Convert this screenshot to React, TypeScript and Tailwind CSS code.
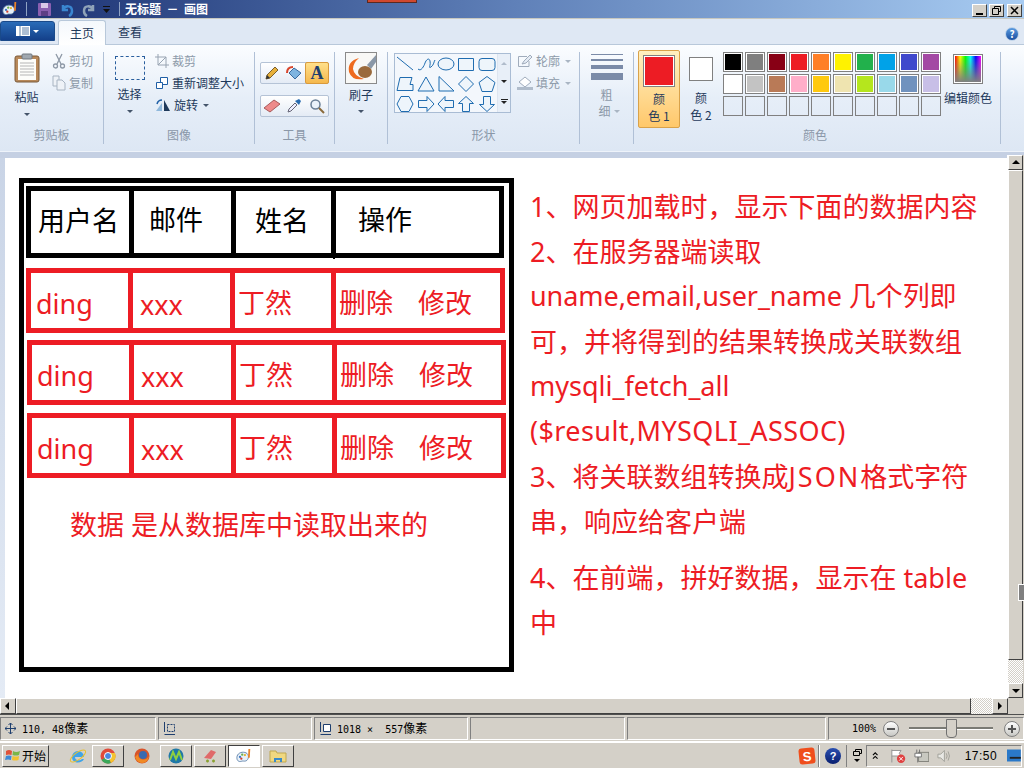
import React from 'react';

const red = 'border-[#ed1c24]';

const palette1 = ['#000000', '#7f7f7f', '#880015', '#ed1c24', '#ff7f27', '#fff200', '#22b14c', '#00a2e8', '#3f48cc', '#a349a4'];
const palette2 = ['#ffffff', '#c3c3c3', '#b97a57', '#ffaec9', '#ffc90e', '#efe4b0', '#b5e61d', '#99d9ea', '#7092be', '#c8bfe7'];

const rightText: { text: React.ReactNode; cls: string }[] = [
  { text: '1、网页加载时，显示下面的数据内容', cls: 'top-[29px]' },
  { text: '2、在服务器端读取', cls: 'top-[74px]' },
  { text: 'uname,email,user_name 几个列即', cls: 'top-[118px] tracking-[-0.07px]' },
  { text: '可，并将得到的结果转换成关联数组', cls: 'top-[164px]' },
  { text: 'mysqli_fetch_all', cls: 'top-[208px]' },
  { text: '($result,MYSQLI_ASSOC)', cls: 'top-[253px] tracking-[0.4px]' },
  { text: <>3、将关联数组转换成<span className="tracking-[2px]">JSON</span>格式字符</>, cls: 'top-[299px]' },
  { text: '串，响应给客户端', cls: 'top-[344px]' },
  { text: '4、在前端，拼好数据，显示在 table', cls: 'top-[400px]' },
  { text: '中', cls: 'top-[445px]' },
];

const Arrow = ({ className = '' }: { className?: string }) => (
  <span className={`inline-block w-0 h-0 border-l-[3px] border-r-[3px] border-t-[3px] border-l-transparent border-r-transparent ${className}`} />
);

const GroupLabel = ({ children }: { children: React.ReactNode }) => (
  <div className="absolute bottom-[1px] left-0 right-0 text-center text-[12px] leading-[16px] text-[#8a97a8]">{children}</div>
);

const ShapeIcon = ({ d }: { d: string }) => (
  <svg width="20" height="20" viewBox="0 0 20 20" fill="none" stroke="#1f6cb0" strokeWidth="1">
    <path d={d} fill="#eef5fb" />
  </svg>
);

const shapes = [
  'M2 3L18 16',
  'M2 15C5 18 8 12 9 9S13 3 14 7S12 15 15 13S18 7 19 6',
  'M2 10a8 6 0 1 0 16 0a8 6 0 1 0 -16 0Z',
  'M2.5 4.5H17.5V16.5H2.5Z',
  'M5 4.5H15Q18 4.5 18 7.5V13.5Q18 16.5 15 16.5H5Q2 16.5 2 13.5V7.5Q2 4.5 5 4.5Z',
  'M5 3.5H17L15 10.5H18V16.5H2Z',
  'M10 3L18 17H2Z',
  'M3 2.5L18 17H3Z',
  'M10 2.5L17.5 10L10 17.5L2.5 10Z',
  'M10 2.5L18 8.5L15 17.5H5L2 8.5Z',
  'M6 2.5H14L18 10L14 17.5H6L2 10Z',
  'M2.5 6.5H11V2.5L18 10L11 17.5V13.5H2.5Z',
  'M17.5 6.5H9V2.5L2 10L9 17.5V13.5H17.5Z',
  'M6.5 17.5V9.5H2.5L10 2.5L17.5 9.5H13.5V17.5Z',
  'M6.5 2.5V10.5H2.5L10 17.5L17.5 10.5H13.5V2.5Z',
];

const ClassicArrow = ({ dir }: { dir: 'up' | 'down' | 'left' | 'right' }) => {
  const pts = { up: '1,6 9,6 5,2', down: '1,3 9,3 5,7', left: '6,1 6,9 2,5', right: '3,1 3,9 7,5' }[dir];
  return (
    <svg width="10" height="10" viewBox="0 0 10 10"><polygon points={pts} fill="#000" /></svg>
  );
};

const bevel = 'border border-t-white border-l-white border-r-[#404040] border-b-[#404040] bg-[#d4d0c8]';
const sunken = 'border border-t-[#808080] border-l-[#808080] border-r-white border-b-white';
const dither = 'bg-[repeating-conic-gradient(#d4d0c8_0%_25%,#ffffff_0%_50%)] bg-[length:2px_2px]';

const TaskButton = ({ active, children }: { active?: boolean; children: React.ReactNode }) => (
  <div className={`w-[32px] h-[22px] flex items-center justify-center ${active ? 'border border-t-[#404040] border-l-[#404040] border-r-white border-b-white bg-white' : bevel}`}>
    {children}
  </div>
);

const PaintIcon = ({ size = 16 }: { size?: number }) => (
  <svg width={size} height={size} viewBox="0 0 18 18">
    <path d="M1 11C1 6 6 4 10 5C14 6 15 10 13 13C11 16 8 14 6 15C3 16 1 14 1 11Z" fill="#e8f0f8" stroke="#5b7fa8" />
    <circle cx="4.5" cy="10" r="1.3" fill="#3b78c4" />
    <circle cx="7" cy="7.5" r="1.3" fill="#6ab04a" />
    <circle cx="10" cy="8" r="1.3" fill="#e0b030" />
    <circle cx="6" cy="12" r="1.3" fill="#d04030" />
    <path d="M14 1L16 1L15.5 11H13.5Z" fill="#e8822a" />
  </svg>
);

const RowCell = ({ w, children, last, pad }: { w: string; children: React.ReactNode; last?: boolean; pad: string }) => (
  <div className={`${w} ${pad} h-full flex items-center ${last ? '' : 'border-r-[5px] border-[#ed1c24]'} shrink-0`}>{children}</div>
);

const DataRow = ({ pos }: { pos: string }) => (
  <div className={`absolute ${pos} w-[479px] h-[65px] border-[5px] ${red} flex text-[#ed1c24] text-[27px] leading-[40px]`}>
    <RowCell w="w-[102px]" pad="pl-[5px] pt-[6px]">ding</RowCell>
    <RowCell w="w-[102px]" pad="pl-[7px] pt-[8px]">xxx</RowCell>
    <RowCell w="w-[101px]" pad="pl-[3px] pt-[4px]">丁然</RowCell>
    <RowCell w="flex-1" pad="pl-[3px] pt-[4px] gap-[25px]" last>
      <span>删除</span>
      <span>修改</span>
    </RowCell>
  </div>
);

export default function App() {
  return (
    <div className="w-[1024px] h-[768px] overflow-hidden flex flex-col bg-[#d4d0c8] font-['Noto_Sans_CJK_SC','Noto_Sans',sans-serif] text-[12px] text-[#1e395b]">
      {/* Title bar */}
      <div className="relative h-[18px] shrink-0 flex items-center bg-gradient-to-r from-[#1b2f70] via-[#5f80b8] to-[#a8ccf2] text-white">
        <div className="ml-[2px]"><PaintIcon /></div>
        <div className="ml-[8px] w-px h-[14px] bg-[#8fa3c4]" />
        <svg className="ml-[10px]" width="15" height="15" viewBox="0 0 15 15">
          <rect x="1" y="1" width="13" height="13" rx="1" fill="#8a5fb0" />
          <rect x="4" y="1" width="7" height="5" fill="#d9c8e8" />
          <rect x="4" y="9" width="7" height="5" fill="#5d3e85" />
        </svg>
        <svg className="ml-[8px]" width="15" height="15" viewBox="0 0 15 15" fill="none" stroke="#3a86d0" strokeWidth="2.5">
          <path d="M3 3V8H8M3 8C5 3 12 3 12 9C12 11 11 13 9 14" />
        </svg>
        <svg className="ml-[6px]" width="15" height="15" viewBox="0 0 15 15" fill="none" stroke="#8fa3b8" strokeWidth="2.5">
          <path d="M12 3V8H7M12 8C10 3 3 3 3 9C3 11 4 13 6 14" />
        </svg>
        <svg className="ml-[6px]" width="9" height="9" viewBox="0 0 9 9">
          <rect x="1" y="1" width="7" height="1" fill="#111" />
          <polygon points="1,4 8,4 4.5,8" fill="#111" />
        </svg>
        <div className="ml-[8px] w-px h-[14px] bg-[#8fa3c4]" />
        <span className="ml-[5px] font-bold text-[12px] leading-[18px] whitespace-pre">无标题  －  画图</span>
        <div className="absolute left-[367px] top-0 w-[50px] h-[3px] bg-[#d0482e] border border-t-0 border-[#5a2a20]" />
        <div className="ml-auto mr-[2px] flex gap-[2px] mt-[3px]">
          <div className={`${bevel} w-[15px] h-[13px] flex items-end justify-center pb-[1px]`}><div className="w-[7px] h-[2px] bg-black" /></div>
          <div className={`${bevel} w-[15px] h-[13px] flex items-center justify-center`}>
            <svg width="9" height="9" viewBox="0 0 9 9" fill="none" stroke="#000"><path d="M2.5 2.5V.5H8.5V5.5H6.5M.5 2.5H6.5V8.5H.5Z" /></svg>
          </div>
          <div className={`${bevel} w-[15px] h-[13px] flex items-center justify-center ml-[1px]`}>
            <svg width="9" height="9" viewBox="0 0 9 9" stroke="#000" strokeWidth="1.5"><path d="M1 1L8 8M8 1L1 8" /></svg>
          </div>
        </div>
      </div>

      {/* Tabs */}
      <div className="h-[27px] shrink-0 flex items-end bg-[#dfe8f4] border-t border-[#c8c8c0] border-b border-b-[#b8c8da] relative">
        <div className="absolute left-0 top-[2px] w-[55px] h-[20px] rounded-t-[3px] bg-gradient-to-b from-[#2a6cb8] to-[#14408a] border border-[#1a4a8a] flex items-center justify-center gap-[3px]">
          <svg width="14" height="10" viewBox="0 0 14 10"><rect x="0" y="0" width="14" height="10" fill="#fff" /><path d="M4 0V10M6 2H13M6 4H13M6 6H13M6 8H13" stroke="#5c7ea8" /></svg>
          <Arrow className="border-t-white" />
        </div>
        <div className="ml-[58px] w-[48px] h-[25px] -mb-px bg-white rounded-t-[3px] border border-[#b8c8da] border-b-0 flex items-center justify-center text-[#1e395b] bg-gradient-to-b from-[#f4f8fc] to-white">主页</div>
        <div className="w-[48px] h-[25px] flex items-center justify-center">查看</div>
        <div className="ml-auto mr-[5px] mb-[3px] w-[14px] h-[14px] rounded-full bg-gradient-to-b from-[#5a9be0] to-[#1a4fa0] border border-[#c0d4ea] text-white text-[10px] leading-[12px] text-center font-bold">?</div>
      </div>

      {/* Ribbon */}
      <div className="h-[107px] shrink-0 flex bg-gradient-to-b from-[#fbfdff] via-[#e6eef8] to-[#dde7f4] border-b border-[#eef3fa]">
        {/* Clipboard */}
        <div className="relative w-[104px] shrink-0 border-r border-[#b0c0d6] my-[7px] flex">
          <div className="w-[53px] flex flex-col items-center pt-[1px]">
            <svg width="26" height="30" viewBox="0 0 26 30">
              <rect x="1" y="3" width="24" height="26" rx="2" fill="#b8895a" stroke="#7a5a3a" />
              <rect x="4" y="6" width="18" height="21" fill="#fdfdfa" />
              <path d="M6 10H20M6 13H20M6 16H20M6 19H20M6 22H20" stroke="#b5b5b5" />
              <rect x="8" y="1" width="10" height="5" rx="1" fill="#a0a8b0" stroke="#707880" />
            </svg>
            <div className="mt-[6px] leading-[16px]">粘贴</div>
            <Arrow className="border-t-[#44546a] mt-[8px]" />
          </div>
          <div className="flex flex-col text-[#8d9aa9] pt-[1px] -ml-[1px] gap-[6px]">
            <div className="flex items-center gap-[3px] h-[16px]">
              <svg width="14" height="16" viewBox="0 0 14 16" fill="none" stroke="#8d98a6" strokeWidth="1.3"><path d="M4 1L9 11M10 1L5 11" /><circle cx="3.5" cy="13" r="2" /><circle cx="10.5" cy="13" r="2" /></svg>
              剪切
            </div>
            <div className="flex items-center gap-[3px] h-[16px]">
              <svg width="14" height="16" viewBox="0 0 14 16" fill="#eef2f7" stroke="#a8b4c2"><path d="M1 1H7V11H1Z" /><path d="M5 5H10L13 8V15H5Z" /></svg>
              复制
            </div>
          </div>
          <GroupLabel>剪贴板</GroupLabel>
        </div>
        {/* Image */}
        <div className="relative w-[151px] shrink-0 border-r border-[#b0c0d6] my-[7px] flex">
          <div className="w-[51px] flex flex-col items-center pt-[4px]">
            <div className="w-[30px] h-[24px] border border-dashed border-[#2a5f9e] mt-0" />
            <div className="mt-[6px] leading-[16px]">选择</div>
            <Arrow className="border-t-[#44546a] mt-[8px]" />
          </div>
          <div className="flex flex-col pt-[1px] gap-[6px]">
            <div className="flex items-center gap-[3px] h-[16px] text-[#8d9aa9]">
              <svg width="14" height="14" viewBox="0 0 14 14" fill="none" stroke="#98a4b2"><path d="M3 0V11H14M0 3H11V14M3 11L11 3" /></svg>
              裁剪
            </div>
            <div className="flex items-center gap-[3px] h-[16px]">
              <svg width="14" height="14" viewBox="0 0 14 14" fill="#fff" stroke="#1f5fa6"><path d="M5.5 1.5H12.5V8.5H5.5Z" /><path d="M1.5 6.5H7.5V12.5H1.5Z" /></svg>
              重新调整大小
            </div>
            <div className="flex items-center gap-[3px] h-[16px]">
              <svg width="16" height="14" viewBox="0 0 16 14"><path d="M1 13L7 5V13Z" fill="#8fb8dc" /><path d="M9 2L15 13H9Z" fill="#1e395b" /><path d="M2 6Q3 2 7 2" fill="none" stroke="#1f5fa6" strokeWidth="1.5" /></svg>
              旋转
              <Arrow className="border-t-[#44546a] ml-[2px]" />
            </div>
          </div>
          <GroupLabel>图像</GroupLabel>
        </div>
        {/* Tools */}
        <div className="relative w-[80px] shrink-0 border-r border-[#b0c0d6] my-[7px] flex flex-col items-center pt-[10px] gap-[11px]">
          <div className="flex w-[69px] h-[22px] border border-[#b5c3d6] rounded-[2px] bg-gradient-to-b from-white to-[#e4ebf5]">
            <div className="flex-1 flex items-center justify-center">
              <svg width="16" height="16" viewBox="0 0 16 16"><path d="M2 14L3 10L11 2L14 5L6 13Z" fill="#e8b03a" stroke="#7a6030" /><path d="M2 14L3 10L6 13Z" fill="#333" /></svg>
            </div>
            <div className="flex-1 flex items-center justify-center">
              <svg width="18" height="16" viewBox="0 0 18 16"><path d="M9 3L16 8L10 14L4 8Z" fill="#7fb4e0" stroke="#3a6a9e" /><path d="M2 8Q2 2 8 2" fill="none" stroke="#d8452c" strokeWidth="2" /></svg>
            </div>
            <div className="flex-1 flex items-center justify-center bg-gradient-to-b from-[#ffe08a] to-[#f5b84c] border border-[#d99a3c] rounded-[2px] font-['Liberation_Serif',serif] font-bold text-[18px] leading-[18px] text-[#1e3f6e] -my-px -mr-px">A</div>
          </div>
          <div className="flex w-[69px] h-[22px] border border-[#b5c3d6] rounded-[2px] bg-gradient-to-b from-white to-[#e4ebf5]">
            <div className="flex-1 flex items-center justify-center">
              <svg width="18" height="14" viewBox="0 0 18 14"><path d="M1 9L11 1L17 5L7 13Z" fill="#ee8a8a" stroke="#a85a5a" /></svg>
            </div>
            <div className="flex-1 flex items-center justify-center">
              <svg width="16" height="16" viewBox="0 0 16 16"><path d="M2 14L3 11L9 5L11 7L5 13Z" fill="#eef" stroke="#667" /><path d="M9 3L13 7L15 3L13 1Z" fill="#2a6cb0" /></svg>
            </div>
            <div className="flex-1 flex items-center justify-center">
              <svg width="16" height="16" viewBox="0 0 16 16" fill="none"><circle cx="6.5" cy="6.5" r="4.5" fill="#eaf2fa" stroke="#6a7f96" strokeWidth="1.5" /><path d="M10 10L15 15" stroke="#8a6a3a" strokeWidth="2" /></svg>
            </div>
          </div>
          <GroupLabel>工具</GroupLabel>
        </div>
        {/* Brushes */}
        <div className="relative w-[53px] shrink-0 border-r border-[#b0c0d6] my-[7px] flex flex-col items-center">
          <svg width="32" height="32" viewBox="0 0 32 32">
            <rect x=".5" y=".5" width="31" height="31" fill="#f8f8f6" stroke="#8a8a8a" />
            <path d="M14 6Q2 9 4 20Q7 29 19 27Q9 24 8 17Q8 11 14 6Z" fill="#ee6a1e" />
            <path d="M31 3L22 13L26 17L31 10Z" fill="#8a98a8" />
            <ellipse cx="20" cy="20" rx="7" ry="6" fill="#9a6a3c" />
          </svg>
          <div className="mt-[3px] leading-[16px]">刷子</div>
          <Arrow className="border-t-[#44546a] mt-[7px]" />
        </div>
        {/* Shapes */}
        <div className="relative w-[192px] shrink-0 border-r border-[#b0c0d6] my-[7px] flex pl-[6px] pt-[1px]">
          <div className="flex h-[60px] w-[117px] border border-[#a9bcd4] bg-[#f3f7fc]">
            <div className="w-[102px] grid grid-cols-5 place-items-center">
              {shapes.map((d) => (
                <ShapeIcon key={d} d={d} />
              ))}
            </div>
            <div className="flex-1 flex flex-col items-center justify-around border-l border-[#dde5f0] bg-[#e8eff8]">
              <span className="inline-block w-0 h-0 border-l-[3px] border-r-[3px] border-b-[3px] border-l-transparent border-r-transparent border-b-[#b0bccb]" />
              <Arrow className="border-t-[#222]" />
              <div className="flex flex-col items-center gap-[1px]">
                <div className="w-[7px] h-px bg-[#222]" />
                <Arrow className="border-t-[#222]" />
              </div>
            </div>
          </div>
          <div className="flex flex-col text-[#8d9aa9] ml-[6px] pt-0 gap-[6px]">
            <div className="flex items-center gap-[3px] h-[16px]">
              <svg width="16" height="14" viewBox="0 0 16 14" fill="none" stroke="#a0acbc"><path d="M1.5 2.5H10M1.5 2.5V12.5H12V7" /><path d="M5 10L7 7L13 1L15 3L9 9Z" fill="#e4ebf4" /></svg>
              轮廓
              <Arrow className="border-t-[#a9b5c3] ml-[2px]" />
            </div>
            <div className="flex items-center gap-[3px] h-[16px]">
              <svg width="16" height="14" viewBox="0 0 16 14"><path d="M8 1L14 6L8 11L2 6Z" fill="#fff" stroke="#a0acbc" /><rect x="0" y="11" width="16" height="3" fill="#b0bccb" /></svg>
              填充
              <Arrow className="border-t-[#a9b5c3] ml-[2px]" />
            </div>
          </div>
          <GroupLabel>形状</GroupLabel>
        </div>
        {/* Size */}
        <div className="relative w-[54px] shrink-0 border-r border-[#b0c0d6] my-[7px] flex flex-col items-center text-[#8d9aa9]">
          <div className="w-[32px] flex flex-col gap-[4px] mt-[2px]">
            <div className="h-px bg-[#7b8ba8]" />
            <div className="h-[2px] bg-[#7b8ba8]" />
            <div className="h-[4px] bg-[#7b8ba8]" />
            <div className="h-[7px] bg-[#7b8ba8]" />
          </div>
          <div className="mt-[7px] leading-[16px]">粗</div>
          <div className="leading-[16px] flex items-center gap-[3px] ml-[5px]">细<Arrow className="border-t-[#a9b5c3]" /></div>
        </div>
        {/* Colors */}
        <div className="relative w-[367px] shrink-0 border-r border-[#b0c0d6] my-[7px] flex">
          <div className="ml-[4px] -mt-[2px] w-[42px] h-[78px] rounded-[2px] border border-[#d9a24a] bg-gradient-to-b from-[#fff0c0] to-[#ffc86a] flex flex-col items-center pt-[4px]">
            <div className="w-[32px] h-[32px] border border-[#808080] p-px bg-white"><div className="w-full h-full bg-[#ed1c24]" /></div>
            <div className="mt-[3px] leading-[17px]">颜</div>
            <div className="leading-[17px]">色 1</div>
          </div>
          <div className="ml-[7px] w-[28px] flex flex-col items-center pt-[5px]">
            <div className="w-[24px] h-[24px] border border-[#808080] bg-white" />
            <div className="mt-[8px] leading-[17px]">颜</div>
            <div className="leading-[17px]">色 2</div>
          </div>
          <div className="ml-[8px] flex flex-col gap-[2px] w-[218px]">
            <div className="flex gap-[2px]">
              {palette1.map((c) => (
                <div key={c} className="w-[20px] h-[20px] border border-[#808080] p-px bg-white"><div className="w-full h-full" style={{ background: c }} /></div>
              ))}
            </div>
            <div className="flex gap-[2px]">
              {palette2.map((c) => (
                <div key={c} className="w-[20px] h-[20px] border border-[#808080] p-px bg-white"><div className="w-full h-full" style={{ background: c }} /></div>
              ))}
            </div>
            <div className="flex gap-[2px]">
              {palette1.map((c) => (
                <div key={c} className="w-[20px] h-[20px] border border-[#808080]" />
              ))}
            </div>
          </div>
          <div className="ml-[3px] flex flex-col items-center pt-[2px]">
            <div className="w-[30px] h-[30px] border border-[#808080] p-[1px] bg-white">
              <div className="w-full h-full bg-[linear-gradient(to_bottom,transparent,#808080),linear-gradient(to_right,#ff0000,#ffff00,#00ff00,#00ffff,#0000ff,#ff00ff)]" />
            </div>
            <div className="mt-[6px] leading-[16px] whitespace-nowrap">编辑颜色</div>
          </div>
          <div className="absolute bottom-[1px] left-[146px] w-[70px] text-center text-[12px] leading-[16px] text-[#8a97a8]">颜色</div>
        </div>
      </div>

      {/* Work area */}
      <div className="flex-1 min-h-0 flex bg-[#c5d0e3]">
        <div className="flex-1 min-w-0 flex flex-col">
          <div className="h-[6px] shrink-0" />
          <div className="flex-1 min-h-0 flex">
            <div className="w-[5px] shrink-0 bg-gradient-to-b from-[#c9d4e6] to-[#e4ebf5]" />
            {/* Canvas: everything here is a free drawing, so it is placed by pixel */}
            <div className="relative flex-1 bg-white overflow-hidden font-['Noto_Sans','Noto_Sans_CJK_SC',sans-serif]">
              <div className="absolute left-[14px] top-[20px] w-[495px] h-[494px] border-[5px] border-black" />
              <div className="absolute left-[21px] top-[28px] w-[478px] h-[72px] border-[5px] border-black flex text-black text-[27px] leading-[40px]">
                <div className="w-[103px] h-full border-r-[5px] border-black pl-[7px] pt-[10px]">用户名</div>
                <div className="w-[102px] h-full border-r-[5px] border-black pl-[15px] pt-[9px]">邮件</div>
                <div className="w-[100px] h-full border-r-[5px] border-black pl-[19px] pt-[10px]">姓名</div>
                <div className="flex-1 h-full pl-[22px] pt-[9px]">操作</div>
              </div>
              <div className="absolute left-[328px] top-[100px] w-[2px] h-px bg-black" />
              <DataRow pos="left-[21px] top-[110px]" />
              <DataRow pos="left-[22px] top-[182px]" />
              <DataRow pos="left-[22px] top-[255px]" />
              <div className="absolute left-[65px] top-[347px] text-[#ed1c24] text-[27px] leading-[40px] whitespace-nowrap">数据 是从数据库中读取出来的</div>
              {rightText.map((line, i) => (
                <div key={i} className={`absolute left-[525px] ${line.cls} text-[#ed1c24] text-[27px] leading-[40px] whitespace-nowrap`}>{line.text}</div>
              ))}
            </div>
          </div>
        </div>
        {/* Vertical scrollbar */}
        <div className="relative w-[17px] mt-[3px] shrink-0 flex flex-col border-l border-white bg-[#d4d0c8] pr-px">
          <div className={`${bevel} h-[15px] shrink-0 flex items-center justify-center`}><ClassicArrow dir="up" /></div>
          <div className={`${bevel} flex-1`} />
          <div className={`${dither} h-[23px] shrink-0`} />
          <div className={`${bevel} h-[15px] shrink-0 flex items-center justify-center`}><ClassicArrow dir="down" /></div>
          <div className="absolute right-0 top-[429px] w-[6px] h-[17px] bg-[#808080] border border-white border-r-0" />
        </div>
      </div>

      {/* Horizontal scrollbar */}
      <div className="h-[16px] shrink-0 flex bg-[#d4d0c8]">
        <div className={`${bevel} w-[16px] flex items-center justify-center`}><ClassicArrow dir="left" /></div>
        <div className={`${bevel} w-[271px] flex-1`} />
        <div className={`${dither} w-[21px] shrink-0`} />
        <div className={`${bevel} w-[16px] shrink-0 flex items-center justify-center`}><ClassicArrow dir="right" /></div>
        <div className="w-[16px] shrink-0" />
      </div>

      {/* Status bar */}
      <div className="h-[27px] shrink-0 border-t border-[#505050] pt-[2px] pb-px flex gap-[2px] text-black font-['DejaVu_Sans_Mono','Noto_Sans_CJK_SC',monospace] text-[10px]">
        <div className={`${sunken} w-[156px] flex items-center pl-[4px] gap-[6px]`}>
          <svg width="11" height="11" viewBox="0 0 11 11" fill="none" stroke="#1f3f6e"><path d="M5.5 0V11M0 5.5H11M3.5 2L5.5 0L7.5 2M3.5 9L5.5 11L7.5 9M2 3.5L0 5.5L2 7.5M9 3.5L11 5.5L9 7.5" /></svg>
          <span className="whitespace-pre">110, 48<span className="text-[12px]">像素</span></span>
        </div>
        <div className={`${sunken} w-[154px] flex items-center pl-[3px]`}>
          <svg width="14" height="14" viewBox="0 0 14 14" fill="none" stroke="#1f3f6e"><path d="M5.5 2.5H12.5V9.5H5.5Z" strokeDasharray="2 1" /><path d="M2.5 0V10M2.5 12.5H13" /></svg>
        </div>
        <div className={`${sunken} w-[154px] flex items-center pl-[3px] gap-[5px]`}>
          <svg width="14" height="14" viewBox="0 0 14 14" fill="#fff" stroke="#1f3f6e"><path d="M5.5 2.5H12.5V9.5H5.5Z" /><path d="M2.5 0V10M2.5 12.5H13" /></svg>
          <span className="whitespace-pre">1018 ×  557<span className="text-[12px]">像素</span></span>
        </div>
        <div className={`${sunken} w-[155px]`} />
        <div className={`${sunken} w-[199px]`} />
        <div className={`${sunken} flex-1 flex items-center pl-[23px] pr-[3px]`}>
          <span>100%</span>
          <div className="ml-[7px] w-[16px] h-[16px] rounded-full bg-gradient-to-b from-white to-[#c8c8c4] border border-[#808080] flex items-center justify-center"><div className="w-[8px] h-[2px] bg-[#555]" /></div>
          <div className="relative ml-[10px] w-[84px] h-[3px] bg-[#7a7a74] border-b border-white">
            <div className="absolute left-[37px] -top-[8px] w-[11px] h-[19px] bg-[#d4d0c8] border border-[#707070] rounded-b-[4px]" />
          </div>
          <div className="ml-auto w-[16px] h-[16px] rounded-full bg-gradient-to-b from-white to-[#c8c8c4] border border-[#808080] flex items-center justify-center relative">
            <div className="w-[8px] h-[2px] bg-[#555]" />
            <div className="absolute w-[2px] h-[8px] bg-[#555]" />
          </div>
        </div>
      </div>

      {/* Taskbar */}
      <div className="h-[27px] shrink-0 border-t-2 border-white flex items-center px-[2px] gap-[2px] font-['Noto_Sans_CJK_SC',sans-serif] text-black">
        <div className={`${bevel} w-[47px] h-[22px] flex items-center pl-[2px] gap-px text-[12px]`}>
          <svg width="16" height="15" viewBox="0 0 16 15">
            <path d="M1 3Q4 1 7 3L6.5 7Q4 6 1 7Z" fill="#e0533a" />
            <path d="M8 3Q11 5 15 3L14 7Q11 8 7.5 7Z" fill="#7ab648" />
            <path d="M1 8Q4 7 6.5 8L6 12Q3 11 0 12Z" fill="#3e8ad6" />
            <path d="M7.5 8Q11 9 14 8L13.5 12Q10 13 7 12Z" fill="#f2c230" />
          </svg>
          开始
        </div>
        <div className="ml-[15px] w-[24px] flex justify-center">
          <svg width="18" height="18" viewBox="0 0 18 18"><path d="M3 10a6 6 0 1 1 12 0H6c0 4 5 4 7 2h2c-2 5-12 5-12-2Z" fill="#3fa4e8" /><ellipse cx="9" cy="9" rx="9" ry="3.5" fill="none" stroke="#e8c030" transform="rotate(-35 9 9)" /></svg>
        </div>
        <TaskButton>
          <svg width="16" height="16" viewBox="0 0 16 16">
            <circle cx="8" cy="8" r="7.5" fill="#e04a3a" />
            <path d="M8 8L1.5 12A7.5 7.5 0 0 0 11 15Z" fill="#3aa85a" />
            <path d="M8 8L11 15A7.5 7.5 0 0 0 15 5H8Z" fill="#f4c430" />
            <circle cx="8" cy="8" r="3.5" fill="#4a86e0" stroke="#fff" />
          </svg>
        </TaskButton>
        <div className="w-[32px] flex justify-center">
          <svg width="16" height="16" viewBox="0 0 16 16"><circle cx="8" cy="8" r="7.5" fill="#d8542a" /><circle cx="9" cy="7" r="4" fill="#3a6ab0" /><path d="M1 9Q3 15 9 15Q14 14 15 8Q12 13 7 11Q4 10 4 6Z" fill="#f08a24" /></svg>
        </div>
        <TaskButton>
          <svg width="16" height="16" viewBox="0 0 16 16"><circle cx="8" cy="8" r="7.5" fill="#1f78a8" /><path d="M2 12L5 4L8 11L11 4L14 12" fill="none" stroke="#8fd040" strokeWidth="2" /></svg>
        </TaskButton>
        <TaskButton>
          <svg width="16" height="16" viewBox="0 0 16 16"><path d="M2 10L9 2L14 4L9 11Z" fill="#e06a6a" /><path d="M4 13H7M5.5 11.5V14.5M10 13H13M11.5 11.5V14.5" stroke="#8aa030" strokeWidth="1.5" /></svg>
        </TaskButton>
        <TaskButton active><PaintIcon /></TaskButton>
        <TaskButton>
          <svg width="18" height="16" viewBox="0 0 18 16"><path d="M1 3H7L8 5H17V14H1Z" fill="#f0d880" stroke="#c0a850" /><path d="M5 14V10H13V14H11V12H7V14Z" fill="#3a8ac8" /></svg>
        </TaskButton>
        <div className="ml-auto flex items-center h-[22px]">
          <div className="w-[16px] h-[16px] rounded-[3px] bg-[#f04e1c] -rotate-6 flex items-center justify-center text-white font-bold text-[13px] leading-none font-['Liberation_Sans',sans-serif]">S</div>
          <div className="ml-[3px] w-px h-[22px] bg-[#808080] border-r border-white box-content" />
          <div className="ml-[5px] w-[16px] h-[16px] rounded-full bg-gradient-to-b from-[#2a4fb0] to-[#0a1f70] text-white text-[11px] leading-[16px] text-center font-bold font-['Liberation_Sans',sans-serif]">?</div>
          <div className="ml-[5px] w-px h-[22px] bg-[#808080]" />
          <div className="ml-[5px] flex flex-col items-center gap-[3px] w-[10px]">
            <svg width="9" height="7" viewBox="0 0 9 7" fill="none" stroke="#000"><path d="M2.5 2V.5H8.5V4.5H6.5M.5 2.5H6.5V6.5H.5Z" /></svg>
            <Arrow className="border-t-black" />
          </div>
          <div className={`${sunken} ml-[4px] w-[156px] h-[22px] flex items-center pl-[5px] gap-[8px]`}>
            <svg width="7" height="9" viewBox="0 0 7 9" fill="none" stroke="#000"><path d="M1 4L3.5 1.5L6 4M1 8L3.5 5.5L6 8" strokeWidth="1.2" /></svg>
            <svg className="ml-[4px]" width="17" height="16" viewBox="0 0 17 16"><path d="M2 1V15M2 2H12L10 5L12 8H2" fill="#fff" stroke="#909090" /><circle cx="12" cy="11" r="4.5" fill="#e04040" /><path d="M10 9L14 13M14 9L10 13" stroke="#fff" /></svg>
            <svg width="16" height="16" viewBox="0 0 16 16"><rect x="5" y="4" width="11" height="10" fill="#c8c8c0" stroke="#808078" /><path d="M3 1V5M6 1V5M1 5H8V9H1ZM4 9V15" fill="#fff" stroke="#707070" /></svg>
            <svg width="16" height="16" viewBox="0 0 16 16" fill="none" stroke="#a0a098"><path d="M1 6H4L8 2V14L4 10H1Z" fill="#e8e8e4" /><path d="M10 5Q12 8 10 11M12 3Q15 8 12 13" /></svg>
            <span className="ml-[5px] text-[12px] font-['Liberation_Sans',sans-serif] tracking-[0.5px]">17:50</span>
            <svg className="ml-[2px]" width="15" height="13" viewBox="0 0 15 13"><rect width="15" height="13" fill="#2a78c8" /><rect x="3" y="8" width="12" height="2" fill="#222" /></svg>
          </div>
        </div>
      </div>
    </div>
  );
}
